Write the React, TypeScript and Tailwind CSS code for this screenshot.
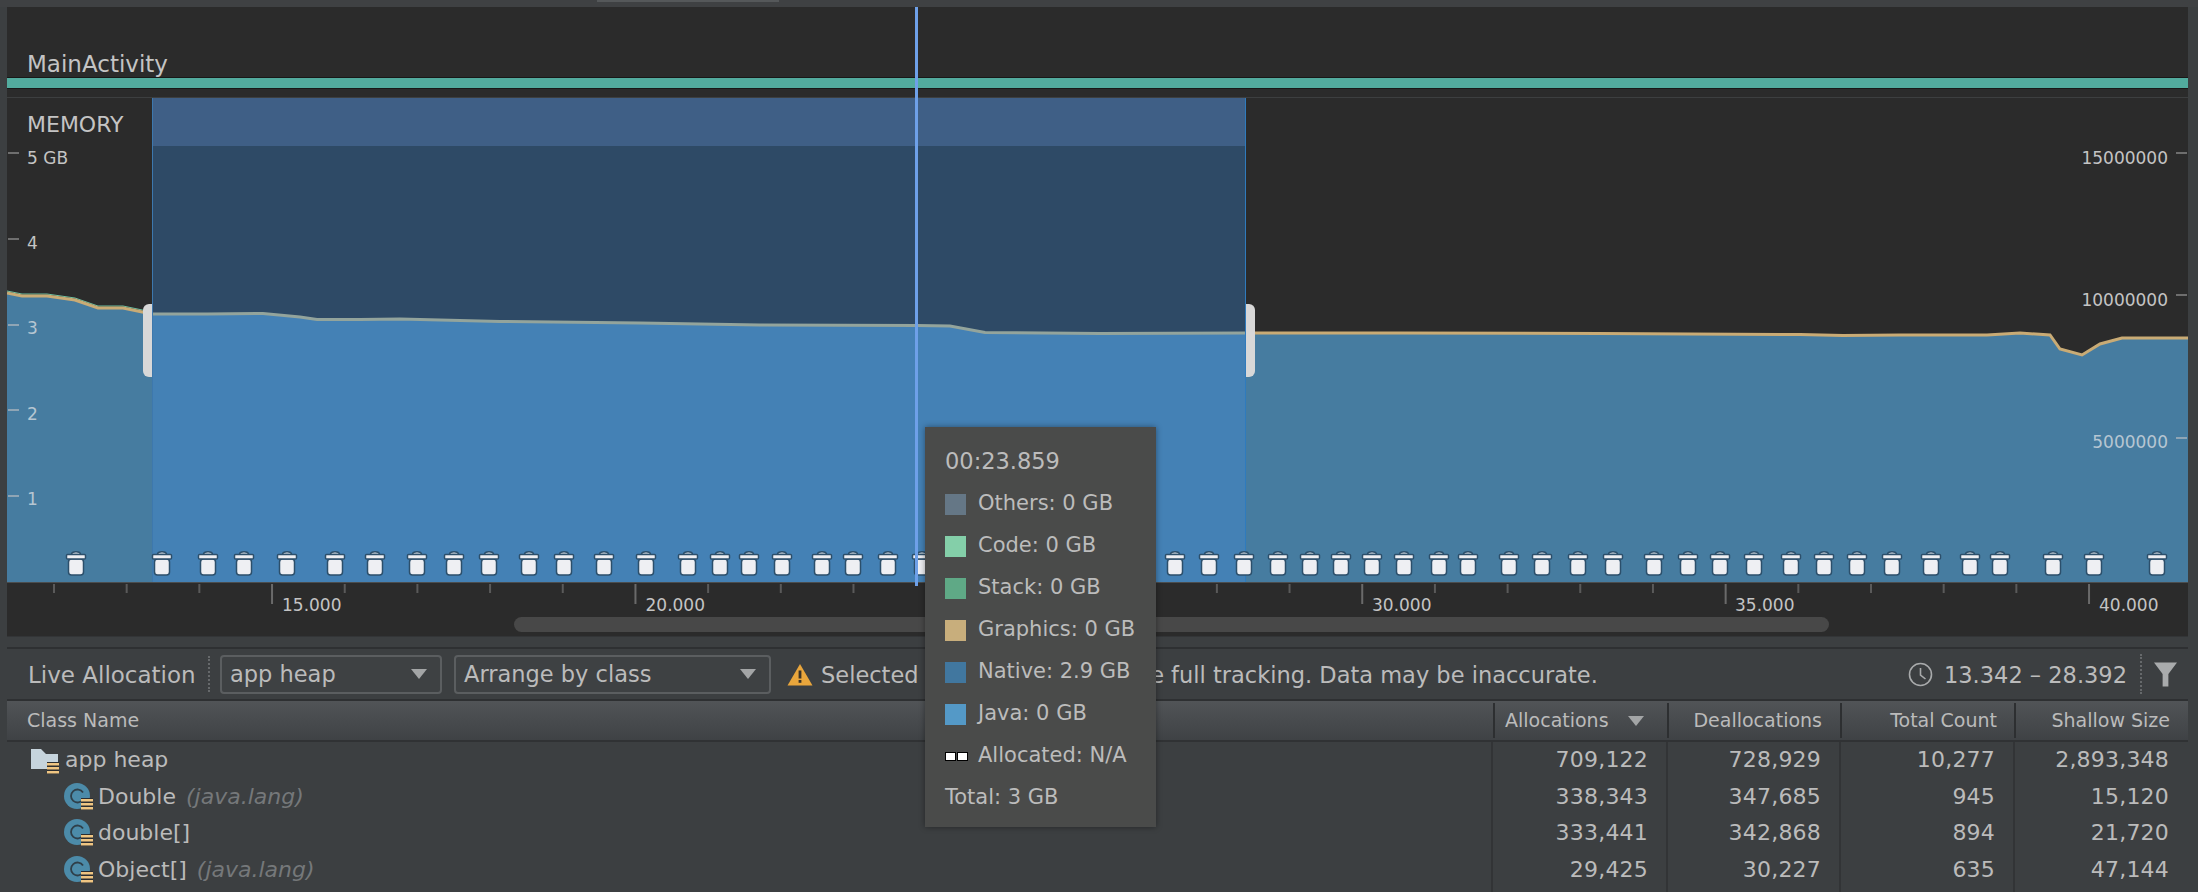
import React from 'react';

// all chart data is in page pixels, the svg viewBox starts at the chart's page origin
const LINE: [number, number][] = [
  [7, 294], [22, 297], [47, 297], [75, 301], [98, 309], [123, 309], [152, 315],
  [167, 315], [207, 315], [263, 314.5], [300, 318], [317, 320.5], [360, 320.5], [400, 320],
  [500, 322.5], [640, 324], [760, 326], [917, 326.5], [950, 327], [985, 333.5], [1100, 334.5], [1245, 334],
  [1400, 334], [1600, 334.5], [1800, 335.5], [1843, 336.5], [1900, 336], [1987, 336], [2020, 334], [2050, 336],
  [2060, 350], [2082, 356], [2100, 345], [2122, 339], [2188, 339],
];

const TRASH = [
  76, 162, 208, 244, 287, 335, 375, 417, 454, 489, 529, 564, 604, 646, 688, 720, 749, 782, 822, 853, 888, 922,
  1175, 1209, 1244, 1278, 1310, 1341, 1372, 1404, 1439, 1468, 1509, 1542, 1578, 1613, 1654, 1688, 1720, 1754,
  1791, 1824, 1857, 1892, 1931, 1970, 2000, 2053, 2094, 2157,
];

const LEFT_AXIS = [
  { label: '5 GB', y: 154, top: 50, muted: false },
  { label: '4', y: 240, top: 135, muted: false },
  { label: '3', y: 326, top: 220, muted: true },
  { label: '2', y: 411, top: 306, muted: true },
  { label: '1', y: 497, top: 391, muted: true },
];

const RIGHT_AXIS = [
  { label: '15000000', y: 154, top: 50, muted: false },
  { label: '10000000', y: 296, top: 192, muted: false },
  { label: '5000000', y: 439, top: 334, muted: true },
];

const TIME_LABELS = [
  { label: '15.000', x: 272 },
  { label: '20.000', x: 635.5 },
  { label: '30.000', x: 1362 },
  { label: '35.000', x: 1725 },
  { label: '40.000', x: 2089 },
];

const LEGEND = [
  { label: 'Others: 0 GB', color: 'bg-[#657786]' },
  { label: 'Code: 0 GB', color: 'bg-[#84cfa9]' },
  { label: 'Stack: 0 GB', color: 'bg-[#5fa986]' },
  { label: 'Graphics: 0 GB', color: 'bg-[#c8ae7c]' },
  { label: 'Native: 2.9 GB', color: 'bg-[#41779f]' },
  { label: 'Java: 0 GB', color: 'bg-[#5499c7]' },
];

const ROWS = [
  { name: 'app heap', pkg: '', root: true, cells: ['709,122', '728,929', '10,277', '2,893,348'] },
  { name: 'Double', pkg: '(java.lang)', root: false, cells: ['338,343', '347,685', '945', '15,120'] },
  { name: 'double[]', pkg: '', root: false, cells: ['333,441', '342,868', '894', '21,720'] },
  { name: 'Object[]', pkg: '(java.lang)', root: false, cells: ['29,425', '30,227', '635', '47,144'] },
  { name: '', pkg: '', root: false, cells: ['', '', '', ''] },
];

const pts = (from: number, to: number) => LINE.filter(([x]) => x >= from && x <= to);
const str = (p: [number, number][]) => p.map(([x, y]) => `${x},${y}`).join(' ');
const area = (from: number, to: number) => `${from},583 ${str(pts(from, to))} ${to},583`;
const lifted = (p: [number, number][]) => p.map(([x, y]) => [x, y - 2] as [number, number]);

const Trash = ({ x }: { x: number }) => (
  <g transform={`translate(${x} 552)`} stroke="#2c4f6b" strokeWidth="1.5" fill="#eeeff3">
    <path d="M-4.5 3.5 Q-4.5 .8 0 .8 Q4.5 .8 4.5 3.5 Z" />
    <rect x="-7.5" y="8" width="15" height="16" rx="3" />
    <rect x="-9.5" y="3.5" width="19" height="4.5" rx="1" />
  </g>
);

const StackBadge = ({ x, y }: { x: number; y: number }) => (
  <g transform={`translate(${x} ${y})`}>
    <rect width="12" height="12" fill="#2b2d30" />
    <rect y="1" width="12" height="2.5" fill="#efc582" />
    <rect y="5" width="12" height="2.5" fill="#efc582" />
    <rect y="9" width="12" height="2.5" fill="#efc582" />
  </g>
);

const FolderIcon = () => (
  <svg width="30" height="27" viewBox="0 0 30 27" className="shrink-0">
    <path d="M1 2h10l5 5h12v15H1z" fill="#c6d4dd" />
    <StackBadge x={17} y={15} />
  </svg>
);

const ClassIcon = () => (
  <svg width="30" height="28" viewBox="0 0 30 28" className="shrink-0">
    <circle cx="13" cy="13" r="13" fill="#4c8ba9" />
    <path d="M19 9.5a6.5 6.5 0 1 0 0 7" fill="none" stroke="#2f3f49" strokeWidth="1.8" />
    <StackBadge x={17} y={15} />
  </svg>
);

const Caret = () => (
  <svg width="16" height="10" viewBox="0 0 16 10" className="shrink-0">
    <path d="M0 0h16l-8 10z" fill="#a3a5a6" />
  </svg>
);

const Dotted = ({ h }: { h: string }) => (
  <div className={`${h} w-0 border-l-2 border-dotted border-[#66696b] shrink-0`} />
);

const Select = ({ label, width }: { label: string; width: string }) => (
  <div className={`${width} h-[39px] shrink-0 flex items-center justify-between pl-[8px] pr-[13px] border-2 border-[#5b5e60] rounded-[4px] bg-[#3e4143]`}>
    <span>{label}</span>
    <Caret />
  </div>
);

const Timeline = () => (
  <div className="flex flex-col bg-[#2b2b2b]">
    <div className="h-[70px] flex items-end pl-[20px]">
      <span className="text-[23px] leading-[26px] text-[#c4c4c4]">MainActivity</span>
    </div>
    <div className="h-[12px] bg-[#52ab9e] border-y border-[#181818]" />
    <div className="h-[9px] border-b border-[#3d3f40]" />

    <div className="relative h-[485px]">
      <svg width="2181" height="485" viewBox="7 99 2181 485" className="absolute inset-0">
        <rect x="152" y="99" width="1093" height="48" fill="#3f5f86" />
        <rect x="152" y="147" width="1093" height="190" fill="#2e4a66" />
        <polygon points={area(7, 152)} fill="#467ca0" />
        <polygon points={area(152, 1245)} fill="#4481b5" />
        <polygon points={area(1245, 2188)} fill="#467ca0" />
        <polyline points={str(lifted(pts(7, 152)))} fill="none" stroke="#6cc0a0" strokeWidth="1" />
        <polyline points={str(pts(7, 152))} fill="none" stroke="#c9ab75" strokeWidth="3" />
        <polyline points={str(pts(1245, 2188))} fill="none" stroke="#c9ab75" strokeWidth="3" />
        <polyline points={str(pts(152, 1245))} fill="none" stroke="#93a49c" strokeWidth="3" />
        <rect x="152" y="99" width="1" height="484" fill="#3d78ad" />
        <rect x="1245" y="99" width="1" height="484" fill="#2f7bbd" />
        <path d="M152 305v73h-3a6 6 0 0 1-6-6v-61a6 6 0 0 1 6-6z" fill="#d8d8d8" />
        <path d="M1246 305v73h3a6 6 0 0 0 6-6v-61a6 6 0 0 0-6-6z" fill="#d8d8d8" />
        {LEFT_AXIS.map((t) => (
          <rect key={t.label} x="8" y={t.y - 1} width="11" height="2" fill={t.muted ? '#8fa5b5' : '#6e6e6e'} />
        ))}
        {RIGHT_AXIS.map((t) => (
          <rect key={t.label} x="2176" y={t.y - 1} width="11" height="2" fill={t.muted ? '#8fa5b5' : '#6e6e6e'} />
        ))}
        {TRASH.map((x) => (
          <Trash key={x} x={x} />
        ))}
        <rect x="7" y="583" width="2181" height="1" fill="#4b4d4e" />
      </svg>

      <span className="absolute left-[20px] top-[14px] text-[22px] leading-[26px] text-[#c4c4c4]">MEMORY</span>
      {LEFT_AXIS.map((t) => (
        <span
          key={t.label}
          className={`absolute left-[20px] text-[17px] leading-[20px] ${t.muted ? 'text-[#b6c6d2]' : 'text-[#c4c4c4]'}`}
          style={{ top: t.top }}
        >
          {t.label}
        </span>
      ))}
      {RIGHT_AXIS.map((t) => (
        <span
          key={t.label}
          className={`absolute right-[20px] text-[17px] leading-[20px] ${t.muted ? 'text-[#b6c6d2]' : 'text-[#c4c4c4]'}`}
          style={{ top: t.top }}
        >
          {t.label}
        </span>
      ))}
    </div>

    <div className="relative h-[53px] flex flex-col">
      <svg width="2181" height="24" viewBox="7 584 2181 24" className="absolute inset-0">
        {Array.from({ length: 29 }, (_, k) => {
          const x = 54 + k * 72.68;
          return <rect key={k} x={x - 1} y="585" width="2" height={k % 5 === 3 ? 20 : 9} fill={k % 5 === 3 ? '#6a6a6a' : '#5a5a5a'} />;
        })}
      </svg>
      {TIME_LABELS.map((t) => (
        <span key={t.label} className="absolute text-[17px] leading-[20px] text-[#c4c4c4]" style={{ left: t.x + 10 - 7, top: 12 }}>
          {t.label}
        </span>
      ))}
      <div className="mt-[34px] ml-[507px] w-[1315px] h-[15px] rounded-full bg-[#484848]" />
    </div>
  </div>
);

const Toolbar = () => (
  <div className="h-[54px] shrink-0 flex items-center bg-[#3c3f41] border-y-2 border-[#2e3032] text-[22.5px] leading-[30px] text-[#bbbbbb]">
    <span className="ml-[21px] w-[180px] shrink-0 text-[23px] pt-[2px]">Live Allocation</span>
    <Dotted h="h-[36px]" />
    <div className="ml-[10px]">
      <Select label="app heap" width="w-[222px]" />
    </div>
    <div className="ml-[12px]">
      <Select label="Arrange by class" width="w-[317px]" />
    </div>
    <svg width="26" height="23" viewBox="0 0 26 23" className="ml-[16px] shrink-0">
      <path d="M13 1 25.5 22.5H.5z" fill="#e9a63c" />
      <rect x="11.6" y="7.5" width="2.8" height="8" fill="#3a3328" />
      <rect x="11.6" y="17" width="2.8" height="2.8" fill="#3a3328" />
    </svg>
    <span className="ml-[8px] whitespace-nowrap pt-[2px]">Selected region does not have full tracking. Data may be inaccurate.</span>
    <div className="ml-auto flex items-center">
      <svg width="25" height="25" viewBox="0 0 25 25" className="shrink-0">
        <circle cx="12.5" cy="12.5" r="11" fill="none" stroke="#a8aaab" strokeWidth="1.6" />
        <path d="M12.5 6v7l5 4" fill="none" stroke="#a8aaab" strokeWidth="1.6" />
      </svg>
      <span className="ml-[11px] whitespace-nowrap pt-[2px]">13.342 – 28.392</span>
      <div className="ml-[13px]">
        <Dotted h="h-[40px]" />
      </div>
      <svg width="23" height="25" viewBox="0 0 24 25" className="ml-[12px] mr-[11px] shrink-0">
        <path d="M0 0h24L15 12v13H9V12z" fill="#a9abac" />
      </svg>
    </div>
  </div>
);

const ClassTable = () => (
  <div className="flex-1 min-h-0 overflow-hidden flex flex-col bg-[#3c3f41]">
    <div className="h-[41px] shrink-0 grid grid-cols-[1486px_174px_173px_174px_174px] bg-linear-to-b from-[#515457] to-[#3f4245] border-b-2 border-[#303234] text-[19px] text-[#bbbbbb]">
      <div className="flex items-center pl-[20px]">Class Name</div>
      <div className="flex items-center justify-between pl-[10px] pr-[23px] border-l-2 border-[#2d2f31] my-[2px]">
        Allocations
        <Caret />
      </div>
      <div className="flex items-center justify-end pr-[18px] border-l-2 border-[#2d2f31] my-[2px]">Deallocations</div>
      <div className="flex items-center justify-end pr-[17px] border-l-2 border-[#2d2f31] my-[2px]">Total Count</div>
      <div className="flex items-center justify-end pr-[18px] border-l-2 border-[#2d2f31] my-[2px]">Shallow Size</div>
    </div>
    {ROWS.map((row, i) => (
      <div key={i} className="h-[36.5px] shrink-0 grid grid-cols-[1484px_175px_173px_174px_174px] text-[22px] leading-[36px] text-[#bbbbbb]">
        <div className={`flex items-center ${row.root ? 'pl-[23px] gap-[5px]' : 'pl-[57px] gap-[4px]'}`}>
          {row.name && (row.root ? <FolderIcon /> : <ClassIcon />)}
          <span className="whitespace-nowrap">{row.name}</span>
          {row.pkg && <span className="ml-[6px] italic text-[#75787a]">{row.pkg}</span>}
        </div>
        {row.cells.map((c, j) => (
          <div key={j} className="text-right pr-[18px] border-l-2 border-[#323436] tracking-[0.2px]">
            {c}
          </div>
        ))}
      </div>
    ))}
  </div>
);

const MemoryTooltip = () => (
  <div className="absolute left-[925px] top-[427px] w-[231px] h-[400px] pt-[14px] pl-[20px] flex flex-col bg-[#4a4b4a] shadow-[0_0_6px_rgba(0,0,0,0.4)] text-[21px] text-[#bcbcbc]">
    <div className="h-[42px] flex items-center text-[22.5px]">00:23.859</div>
    {LEGEND.map((l) => (
      <div key={l.label} className="h-[42px] flex items-center">
        <div className={`w-[21px] h-[21px] shrink-0 ${l.color}`} />
        <span className="ml-[12px] whitespace-nowrap">{l.label}</span>
      </div>
    ))}
    <div className="h-[42px] flex items-center">
      <div className="w-[21px] flex gap-[1px] shrink-0">
        <div className="w-[11px] h-[9px] shrink-0 bg-white border border-black" />
        <div className="w-[11px] h-[9px] shrink-0 bg-white border border-black" />
      </div>
      <span className="ml-[12px] whitespace-nowrap">Allocated: N/A</span>
    </div>
    <div className="h-[42px] flex items-center">Total: 3 GB</div>
  </div>
);

export default function App() {
  return (
    <div className="relative w-[2198px] h-[892px] overflow-hidden flex flex-col bg-[#3c3f41] font-['DejaVu_Sans',sans-serif]">
      <div className="h-[7px] shrink-0 bg-[#3f4143]">
        <div className="ml-[597px] w-[182px] h-[2px] bg-[#55585a]" />
      </div>
      <div className="flex-1 min-h-0 flex flex-col ml-[7px] mr-[10px]">
        <Timeline />
        <div className="h-[11px] shrink-0 bg-[#3c3f41] border-t border-[#333537]" />
        <Toolbar />
        <ClassTable />
      </div>
      {/* cursor + tooltip sit over everything */}
      <div className="absolute left-[915px] top-[7px] w-[3px] h-[579px] bg-[#6ea0e8]" />
      <MemoryTooltip />
    </div>
  );
}
